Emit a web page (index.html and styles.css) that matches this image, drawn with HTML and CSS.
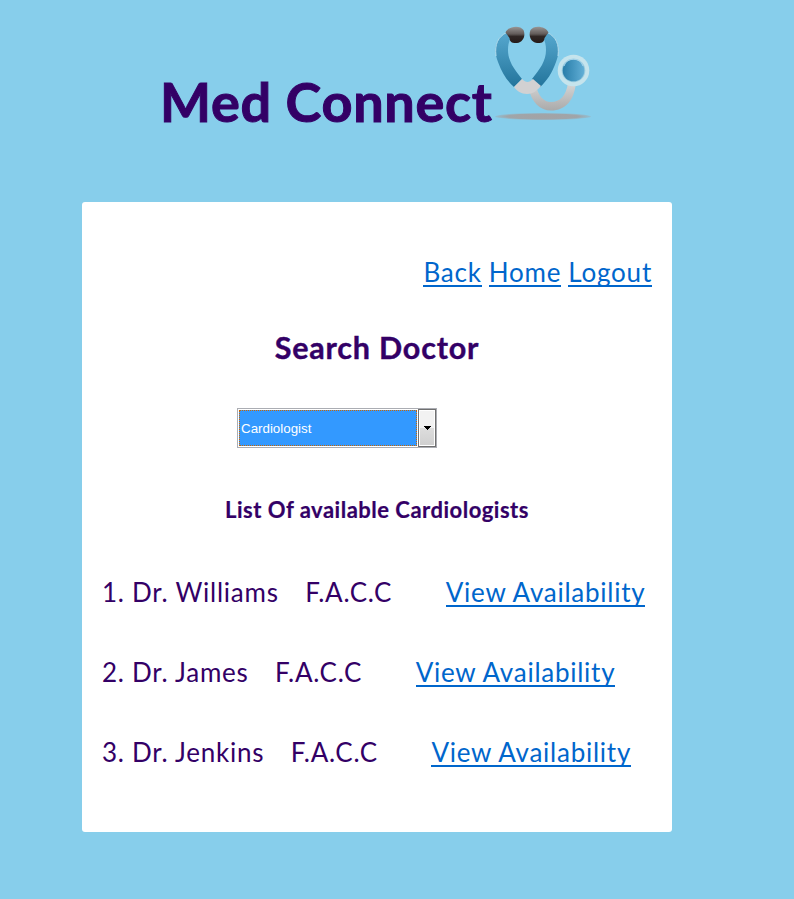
FILE: index.html
```html
<!DOCTYPE html>
<html lang="en">
<head>
<meta charset="utf-8">
<title>Med Connect</title>
<link rel="stylesheet" href="styles.css">
</head>
<body>
<header class="brand">
  <h1>Med Connect</h1>
  <svg class="logo" width="100" height="100" viewBox="0 0 100 100" aria-hidden="true">
    <defs>
      <linearGradient id="tube" x1="0" y1="0" x2="0" y2="1"><stop offset="0" stop-color="#56a8cf"/><stop offset="1" stop-color="#23749b"/></linearGradient>
      <linearGradient id="tip" x1="0" y1="0" x2="0" y2="1"><stop offset="0" stop-color="#9a9695"/><stop offset=".45" stop-color="#625b59"/><stop offset=".6" stop-color="#302725"/><stop offset="1" stop-color="#251b19"/></linearGradient>
      <linearGradient id="hose" x1="0" y1="0" x2="0" y2="1"><stop offset="0" stop-color="#d6d6d6"/><stop offset="1" stop-color="#aaa"/></linearGradient>
      <linearGradient id="disc" x1="0" y1="0" x2="1" y2="0"><stop offset="0" stop-color="#287da9"/><stop offset="1" stop-color="#62afd6"/></linearGradient>
      <radialGradient id="shade"><stop offset="0" stop-color="#a3a3a5"/><stop offset=".75" stop-color="#a0a5a9"/><stop offset="1" stop-color="#9bb0bb" stop-opacity=".5"/></radialGradient>
    </defs>
    <ellipse cx="48" cy="91.500" rx="48" ry="3.500" fill="url(#shade)"/>
    <path d="M33 62C37 78 45 85.500 56 85.500C71 85.500 79 75 81 58L73 58C71 71 65 77 56 77C49 77 43 71 41 60Z" fill="url(#hose)"/>
    <path d="M11.500 7.500C0 13-2 25 3 37C7 48 12 56 19 62L27 54C19 44 13 36 13 25C13 20 14 16 16 12Z" fill="url(#tube)"/>
    <path d="M52.500 7.500C64 13 66 25 61 37C57 48 52 56 45 62L37 54C45 44 51 36 51 25C51 20 50 16 48 12Z" fill="url(#tube)"/>
    <path d="M11.500 7.500C3 12-.500 19 1 31M52.500 7.500C61 12 64.500 19 63 31" fill="none" stroke="#b5deee" stroke-width="1"/>
    <path d="M27 54C31 58 34 58 38 54L46 61C42 65 39 69 32 69C26 69 22 66 19 62Z" fill="#d2d1d2"/>
    <path d="M10.500 7.500C13 1 25-.500 28.500 5C31 11 28 17.500 22 18C18 18 15 18 14.500 13Z" fill="url(#tip)"/>
    <path d="M53.500 7.500C51 1 39-.500 35.500 5C33 11 36 17.500 42 18C46 18 49 18 49.500 13Z" fill="url(#tip)"/>
    <circle cx="78.500" cy="45.500" r="15.800" fill="#c5e4ed"/>
    <circle cx="78.500" cy="45.500" r="11.800" fill="#9accdf"/>
    <circle cx="78.500" cy="45.500" r="10.800" fill="url(#disc)"/>
    <path d="M69 41A10 10 0 0 1 88 41" fill="none" stroke="#a6d5ec" stroke-width="1"/>
  </svg>
</header>
<main class="card">
  <nav class="links"><a href="#">Back</a><a href="#">Home</a><a href="#">Logout</a></nav>
  <h2>Search Doctor</h2>
  <div class="select" role="combobox" aria-label="Specialty" tabindex="0">
    <span class="value">Cardiologist</span>
    <span class="arrow"><svg width="8" height="4" viewBox="0 0 8 4" shape-rendering="crispEdges"><path d="M0 0H8L4 4Z"/></svg></span>
  </div>
  <h3>List Of available Cardiologists</h3>
  <div class="doctor"><span class="name">1. Dr. Williams</span><span class="degree">F.A.C.C</span><a href="#">View Availability</a></div>
  <div class="doctor"><span class="name">2. Dr. James</span><span class="degree">F.A.C.C</span><a href="#">View Availability</a></div>
  <div class="doctor"><span class="name">3. Dr. Jenkins</span><span class="degree">F.A.C.C</span><a href="#">View Availability</a></div>
</main>
</body>
</html>
```
FILE: styles.css
```css
* { box-sizing: border-box; }
body { margin: 0; min-height: 899px; background: #87ceeb; color: #306; font-family: Lato, "Noto Sans", sans-serif; }
h1, h2, h3 { margin: 0; font-weight: 700; white-space: nowrap; }
.brand { height: 202px; padding: 25px 0 0 160px; display: flex; align-items: flex-start; }
h1 { width: 335px; padding-top: 41px; font-size: 54px; line-height: 72px; letter-spacing: .7px; -webkit-text-stroke: 1px #306; }
.logo { flex: none; overflow: visible; }
.card { width: 590px; height: 630px; margin-left: 82px; padding: 50px 20px 0; background: #fff; border-radius: 3px; }
a { color: #06c; text-decoration: none; border-bottom: 2px solid #06c; height: 35px; line-height: 40px; }
.links { height: 40px; display: flex; justify-content: flex-end; gap: 7px; font-size: 26px; letter-spacing: .8px; }
h2 { margin-top: 35px; text-align: center; font-size: 30.5px; line-height: 40px; letter-spacing: .8px; -webkit-text-stroke: .4px #306; }
.select { width: 200px; height: 40px; margin: 41px 0 0 135px; padding: 1px; border: 1px solid #abadb3; display: flex; gap: 2px; }
.value { flex: 1; padding-left: 1px; border: 1px dotted #cc6600; background: #39f; color: #fff; font: 13.333px/35px "Liberation Sans", sans-serif; }
.arrow { width: 18px; margin: -1px -1px -1px 0; margin-right: -1px; border: 1px solid #707070; box-shadow: inset 0 0 0 1px #fff; background: linear-gradient(#f2f2f2 0 50%, #ddd 50%, #cfcfcf); display: flex; align-items: center; justify-content: center; }
.select { gap: 1px; }
h3 { margin: 42px 0; text-align: center; font-size: 22px; line-height: 40px; letter-spacing: .5px; -webkit-text-stroke: .2px #306; }
.doctor { height: 40px; margin-top: 40px; display: flex; font-size: 26px; line-height: 40px; letter-spacing: .75px; white-space: nowrap; }
.degree { margin: 0 53.5px 0 26.5px; }
```
